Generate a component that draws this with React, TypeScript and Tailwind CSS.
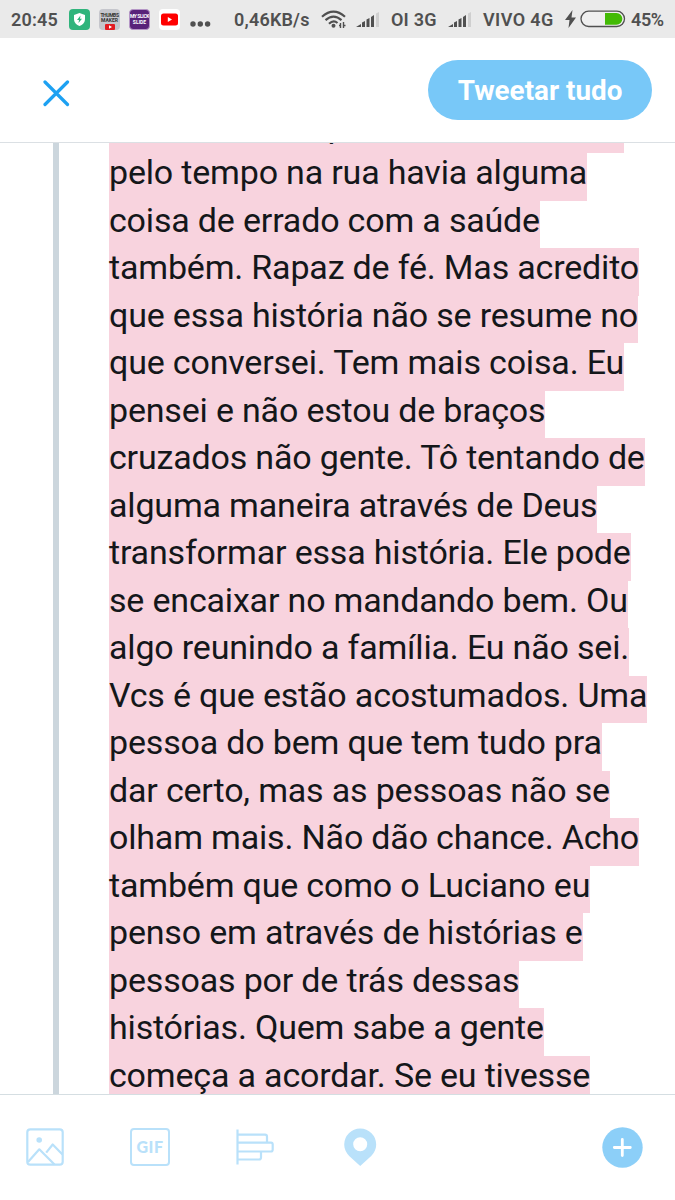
import type { ReactNode } from 'react';

const TWEET_LINES = [
  'sofrido com aquela vida. Olha. E aí',
  'pelo tempo na rua havia alguma',
  'coisa de errado com a saúde',
  'também. Rapaz de fé. Mas acredito',
  'que essa história não se resume no',
  'que conversei. Tem mais coisa. Eu',
  'pensei e não estou de braços',
  'cruzados não gente. Tô tentando de',
  'alguma maneira através de Deus',
  'transformar essa história. Ele pode',
  'se encaixar no mandando bem. Ou',
  'algo reunindo a família. Eu não sei.',
  'Vcs é que estão acostumados. Uma',
  'pessoa do bem que tem tudo pra',
  'dar certo, mas as pessoas não se',
  'olham mais. Não dão chance. Acho',
  'também que como o Luciano eu',
  'penso em através de histórias e',
  'pessoas por de trás dessas',
  'histórias. Quem sabe a gente',
  'começa a acordar. Se eu tivesse',
];

function SignalIcon() {
  return (
    <svg width="24" height="16" viewBox="0 0 24 16" fill="#505050">
      <path d="M0 16 L5 13 V16 Z M6 11.5 L9 10 V16 H6 Z M10.5 8.5 L13.5 7 V16 H10.5 Z M15 6 L18 4 V16 H15 Z" />
      <path d="M20 2.5 L23 1 V16 H20 Z" fill="#cfcfcf" />
    </svg>
  );
}

function AppBadge({ className, children }: { className: string; children: ReactNode }) {
  return (
    <div className={`flex h-[21px] w-[21px] shrink-0 flex-col items-center justify-center overflow-hidden rounded-[4px] ${className}`}>
      {children}
    </div>
  );
}

function StatusBar() {
  return (
    <div className="flex h-[38px] shrink-0 items-center bg-[#eaeaea] text-[18px] font-semibold whitespace-nowrap text-[#505050]">
      <span className="ml-[11px] w-[58px] tracking-[0.2px]">20:45</span>
      <AppBadge className="bg-[#30b47c]">
        <svg width="13" height="15" viewBox="0 0 13 15">
          <path d="M6.5 1 L12 3 V7 C12 10.5 9.5 13 6.5 14 C3.5 13 1 10.5 1 7 V3 Z" fill="#fff" />
          <path d="M7.5 3.5 L4 8 H6 L5.5 11 L9 6.7 H7 Z" fill="#30b47c" />
        </svg>
      </AppBadge>
      <AppBadge className="ml-[9px] justify-end bg-[#c5c6cc] text-[5px] leading-[5px] font-bold text-[#343434]">
        <span className="tracking-[-0.4px]">THUMBS</span>
        <span>MAKER</span>
        <svg width="10" height="6" viewBox="0 0 10 6" className="mt-px">
          <rect width="10" height="6" rx="1" fill="#e21b22" />
          <path d="M4 1.2 L7 3 L4 4.8 Z" fill="#fff" />
        </svg>
      </AppBadge>
      <AppBadge className="ml-[9px] border border-[#b596c6] bg-[#58227a] text-[5px] leading-[6px] font-bold text-white">
        <span className="tracking-[-0.4px]">MY SLICK</span>
        <span>SLIDE</span>
      </AppBadge>
      <AppBadge className="ml-[9px] bg-white">
        <svg width="17" height="13" viewBox="0 0 17 13">
          <rect y="0.5" width="17" height="12" rx="2.5" fill="#f00" />
          <path d="M6.8 4 L11 6.5 L6.8 9 Z" fill="#fff" />
        </svg>
      </AppBadge>
      <svg width="21" height="6" viewBox="0 0 21 6" fill="#505050" className="mt-[10px] ml-[10px]">
        <circle cx="3" cy="3" r="2.7" />
        <circle cx="10.3" cy="3" r="2.7" />
        <circle cx="17.6" cy="3" r="2.7" />
      </svg>
      <span className="ml-[23px] w-[87px] tracking-[0.2px]">0,46KB/s</span>
      <svg width="26" height="19" viewBox="0 0 26 19" fill="none" stroke="#505050" strokeWidth="2.2">
        <path d="M1 6.7 Q12.5 -3.5 24 6.7" />
        <path d="M4.5 10.2 Q12.5 3.2 20.5 10.2" />
        <path d="M8 13.7 Q12.5 9.5 16.5 13" />
        <circle cx="12.5" cy="15.8" r="2" fill="#505050" stroke="none" />
        <path d="M19.5 13 V18 M22.5 12 V18 M18 15.5 H19.5 M22.5 15.5 H24.5" strokeWidth="1.4" />
      </svg>
      <div className="ml-[9px]"><SignalIcon /></div>
      <span className="ml-[11px] w-[57px] tracking-[0.2px]">OI 3G</span>
      <SignalIcon />
      <span className="ml-[11px] w-[82px] tracking-[0.4px]">VIVO 4G</span>
      <svg width="12" height="18" viewBox="0 0 12 18" fill="#505050">
        <path d="M7.5 0 L0 10 H4.5 L3.5 18 L11 7.5 H6.5 Z" />
      </svg>
      <svg width="46" height="18" viewBox="0 0 46 18" className="ml-[3px]">
        <rect x="1" y="1.2" width="43.5" height="15.3" rx="7.65" fill="#efefef" stroke="#505050" strokeWidth="1.3" />
        <path d="M25 3 H36.5 A5.85 5.85 0 0 1 36.5 14.7 H25 Z" fill="#43ba05" />
      </svg>
      <span className="ml-[5px] tracking-[-0.4px]">45%</span>
    </div>
  );
}

function ComposerHeader() {
  return (
    <header className="flex h-[105px] shrink-0 items-center justify-between border-b border-[#dbe0e4] bg-white pr-[23px] pl-[43px]">
      <button aria-label="Fechar">
        <svg width="27" height="27" viewBox="0 0 27 27" stroke="#1da1f2" strokeWidth="3.2" strokeLinecap="round" className="mt-[6px]">
          <path d="M2 2 L24.5 24.5 M24.5 2 L2 24.5" />
        </svg>
      </button>
      <button className="h-[60px] w-[224px] rounded-full bg-[#78c8f8] pt-[2px] text-[27.8px] font-bold text-white">
        Tweetar tudo
      </button>
    </header>
  );
}

function ComposerToolbar() {
  return (
    <footer className="flex h-[106px] shrink-0 items-center border-t border-[#d5dee2] bg-white pb-px pl-[26px]">
      <svg width="38" height="38" viewBox="0 0 38 38" fill="none" stroke="#b9e1fa" strokeWidth="2.2" strokeLinejoin="round">
        <rect x="1.3" y="1.3" width="35.4" height="35.4" rx="3" />
        <circle cx="13.2" cy="12" r="2.8" fill="#b9e1fa" stroke="none" />
        <path d="M2 34 L13.3 21.3 L28.5 36.5 M20.2 24.6 L26.7 16.5 L36.5 26.5" />
      </svg>
      <div className="ml-[66px] flex h-[38px] w-[40px] items-center justify-center rounded-[4px] border-2 border-[#b9e1fa] font-[Lato,sans-serif] text-[16px] font-black tracking-[0.5px] text-[#b9e1fa]">
        GIF
      </div>
      <svg width="38" height="36" viewBox="0 0 38 36" fill="none" stroke="#b9e1fa" strokeWidth="2.2" strokeLinejoin="round" className="ml-[66px]">
        <path d="M1.5 0.5 V35.5" />
        <path d="M2 5.7 H29 Q31 5.7 31 7.7 V13.5 M2 13.7 H35 Q36.7 13.7 36.7 15.5 V20.5 Q36.7 22.5 35 22.5 H2 M25 22.5 V28.5 Q25 30.5 23 30.5 H2" />
      </svg>
      <svg width="33" height="38" viewBox="0 0 33 38" fill="#b9e1fa" className="ml-[70px]">
        <path fillRule="evenodd" d="M16.2 0.5 A16 16 0 0 0 0.2 16.5 C0.2 21 2.2 25 5.2 28 L16.2 38 L27.2 28 C30.2 25 32.2 21 32.2 16.5 A16 16 0 0 0 16.2 0.5 Z M16.2 9.2 A7 7 0 1 1 16.2 23.2 A7 7 0 1 1 16.2 9.2 Z" />
      </svg>
      <svg width="41" height="41" viewBox="0 0 41 41" className="mr-[32px] ml-auto">
        <circle cx="20.5" cy="20.5" r="20.2" fill="#8ccff8" />
        <path d="M20.3 12.5 V28.5 M12.3 20.5 H28.3" stroke="#fff" strokeWidth="2.8" strokeLinecap="round" />
      </svg>
    </footer>
  );
}

export default function App() {
  return (
    <div className="flex h-[1200px] w-[675px] flex-col overflow-hidden bg-white font-[Roboto,sans-serif]">
      <StatusBar />
      <ComposerHeader />

      {/* Tweet text, scrolled; all of it is over the character limit */}
      <main className="flex min-h-0 flex-1 overflow-hidden">
        <div className="ml-[53px] w-[6px] shrink-0 bg-[#ccd6dd]" />
        <div className="-mt-[37.5px] ml-[50px]">
          {TWEET_LINES.map((line) => (
            <p
              key={line}
              className="h-[47.5px] w-fit bg-[#f8d3de] text-[34px] leading-[38px] tracking-[-0.18px] whitespace-nowrap text-[#14171a]"
            >
              {line}
            </p>
          ))}
        </div>
      </main>

      <ComposerToolbar />
    </div>
  );
}
